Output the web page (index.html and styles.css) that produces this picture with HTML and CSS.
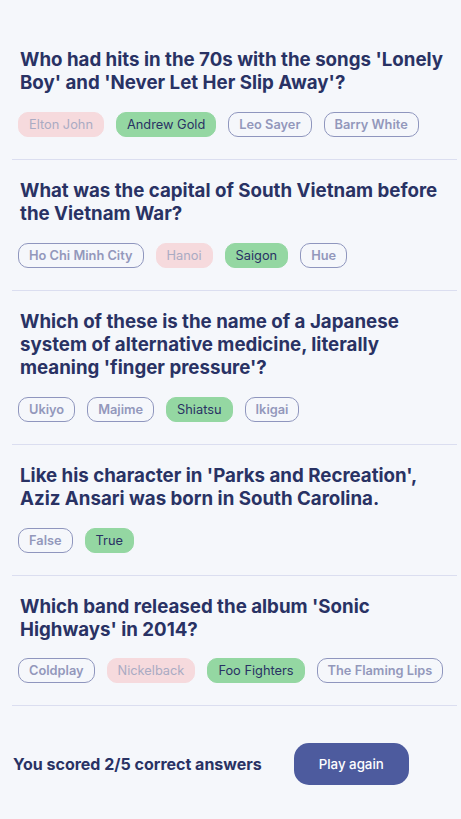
FILE: index.html
```html
<!DOCTYPE html>
<html lang="en">
<head>
<meta charset="utf-8">
<title>Quiz results</title>
<link rel="stylesheet" href="styles.css">
</head>
<body>
<main class="quiz">
  <section class="item">
    <h2 class="question">Who had hits in the 70s with the songs 'Lonely Boy' and 'Never Let Her Slip Away'?</h2>
    <div class="options">
      <span class="opt wrong">Elton John</span>
      <span class="opt correct">Andrew Gold</span>
      <span class="opt">Leo Sayer</span>
      <span class="opt">Barry White</span>
    </div>
  </section>
  <section class="item">
    <h2 class="question">What was the capital of South Vietnam before the Vietnam War?</h2>
    <div class="options">
      <span class="opt">Ho Chi Minh City</span>
      <span class="opt wrong">Hanoi</span>
      <span class="opt correct">Saigon</span>
      <span class="opt">Hue</span>
    </div>
  </section>
  <section class="item">
    <h2 class="question">Which of these is the name of a Japanese system of alternative medicine, literally meaning 'finger pressure'?</h2>
    <div class="options">
      <span class="opt">Ukiyo</span>
      <span class="opt">Majime</span>
      <span class="opt correct">Shiatsu</span>
      <span class="opt">Ikigai</span>
    </div>
  </section>
  <section class="item">
    <h2 class="question">Like his character in 'Parks and Recreation', Aziz Ansari was born in South Carolina.</h2>
    <div class="options">
      <span class="opt">False</span>
      <span class="opt correct">True</span>
    </div>
  </section>
  <section class="item">
    <h2 class="question">Which band released the album 'Sonic Highways' in 2014?</h2>
    <div class="options">
      <span class="opt">Coldplay</span>
      <span class="opt wrong">Nickelback</span>
      <span class="opt correct">Foo Fighters</span>
      <span class="opt">The Flaming Lips</span>
    </div>
  </section>
  <footer class="result">
    <p class="score">You scored 2/5 correct answers</p>
    <button class="again" type="button">Play again</button>
  </footer>
</main>
</body>
</html>
```

FILE: styles.css
```css
html, body {
  margin: 0;
  padding: 0;
  background: #F5F7FB;
}

body {
  font-family: Inter, "Noto Sans", sans-serif;
  color: #293264;
}

.quiz {
  padding: 29px 4px 0 12px;
}

.item {
  padding: 19px 0 22px;
  border-bottom: 1px solid #DBDEF0;
}

.question {
  margin: 0 0 0 8px;
  font-size: 18.7px;
  font-weight: 700;
  line-height: 23.4px;
  color: #293264;
}

.options {
  display: flex;
  flex-wrap: wrap;
  gap: 12px;
  margin: 17px 0 0 6px;
}

.opt {
  display: inline-block;
  box-sizing: border-box;
  height: 25px;
  padding: 0 10px;
  border: 1px solid #8F96BE;
  border-radius: 10px;
  font-size: 12.8px;
  line-height: 23px;
  font-weight: 600;
  color: #9398BB;
  white-space: nowrap;
}

.opt.correct {
  background: #94D7A2;
  border-color: #94D7A2;
  color: #293264;
  font-weight: 400;
}

.opt.wrong {
  background: #F6DADD;
  border-color: #F6DADD;
  color: #AAABC3;
  font-weight: 400;
}

.result {
  display: flex;
  align-items: center;
  gap: 32px;
  padding: 37px 0 0 1px;
}

.score {
  margin: 0;
  font-size: 16px;
  font-weight: 700;
  color: #293264;
}

.again {
  width: 115px;
  height: 42px;
  border: none;
  border-radius: 15px;
  background: #4D5B9E;
  color: #FFFFFF;
  font-family: Inter, "Noto Sans", sans-serif;
  font-size: 13.3px;
  font-weight: 500;
}
```
